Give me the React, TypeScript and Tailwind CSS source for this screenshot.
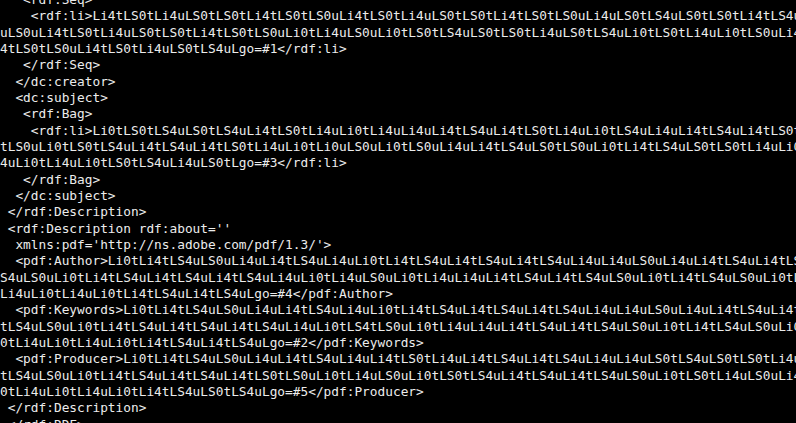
import React from "react";

// terminal dump of an XMP packet, wrapped at the window edge
const lines: string[] = [
  "   <rdf:Seq>",
  "    <rdf:li>Li4tLS0tLi4uLS0tLS0tLi4tLS0tLS0uLi4tLS0tLi4uLS0tLS0tLi4tLS0tLS0uLi4uLS0tLS4uLS0tLS0tLi4tLS4uLS0tLi4u",
  "uLS0uLi4tLS0tLi4uLS0tLS0tLi4tLS0tLS0uLi0tLi4uLS0uLi0tLS0tLS4uLS0tLS0tLi4uLS0tLS4uLi0tLS0tLi4uLi0tLS0uLi4tLS0t",
  "4tLS0tLS0uLi4tLS0tLi4uLS0tLS4uLgo=#1</rdf:li>",
  "   </rdf:Seq>",
  "  </dc:creator>",
  "  <dc:subject>",
  "   <rdf:Bag>",
  "    <rdf:li>Li0tLS0tLS4uLS0tLS4uLi4tLS0tLi4uLi0tLi4uLi4uLi4tLS4uLi4tLS0tLi4uLi0tLS4uLi4uLi4tLS4uLi4tLS0tLi4uLi0t",
  "tLS0uLi0tLS0tLS4uLi4tLS4uLi4tLS0tLi4uLi0tLi0uLS0uLi0tLS0uLi4uLi4tLS4uLS0tLS0uLi0tLi4tLS4uLS0tLS0tLi4uLi0tLS4u",
  "4uLi0tLi4uLi0tLS0tLS4uLi4uLS0tLgo=#3</rdf:li>",
  "   </rdf:Bag>",
  "  </dc:subject>",
  " </rdf:Description>",
  " <rdf:Description rdf:about=''",
  "  xmlns:pdf='http://ns.adobe.com/pdf/1.3/'>",
  "  <pdf:Author>Li0tLi4tLS4uLS0uLi4uLi4tLS4uLi4uLi0tLi4tLS4uLi4tLS4uLi4tLS4uLi4uLi4uLS0uLi4uLi4tLS4uLi4tLS4uLi4u",
  "S4uLS0uLi0tLi4tLS4uLi4tLS4uLi4tLS4uLi4uLi0tLi4uLS0uLi0tLi4uLi4uLi4tLS4uLi4tLS4uLS0uLi0tLi4tLS4uLS0uLi0tLi4u",
  "Li4uLi0tLi4uLi0tLi4tLS4uLi4tLS4uLgo=#4</pdf:Author>",
  "  <pdf:Keywords>Li0tLi4tLS4uLS0uLi4uLi4tLS4uLi4uLi0tLi4tLS4uLi4tLS4uLi4tLS4uLi4uLi4uLS0uLi4uLi4tLS4uLi4tLS4u",
  "tLS4uLS0uLi0tLi4tLS4uLi4tLS4uLi4tLS4uLi4uLi0tLS4tLS0uLi0tLi4uLi4uLi4tLS4uLi4tLS4uLS0uLi0tLi4tLS4uLS0uLi0tLi4u",
  "0tLi4uLi0tLi4uLi0tLi4tLS4uLi4tLS4uLgo=#2</pdf:Keywords>",
  "  <pdf:Producer>Li0tLi4tLS4uLS0uLi4uLi4tLS4uLi4uLi4tLS0tLi4uLi4tLS4uLi4tLS4uLi4uLi4uLS0tLS4uLS0tLS0tLi4uLS0t",
  "tLS4uLS0uLi0tLi4tLS4uLi4tLS4uLi4tLS0tLS0uLi0tLi4uLS0uLi0tLS0tLS4uLi4tLS4uLi4tLS4uLS0uLi0tLS0tLi4uLS0uLi4tLS4u",
  "0tLi4uLi0tLi4uLi0tLi4tLS4uLS0tLS4uLgo=#5</pdf:Producer>",
  " </rdf:Description>",
  " </rdf:RDF>",
];

const App = () => {
  return (
    <div className="w-[796px] h-[423px] overflow-hidden bg-black">
      <div className="mt-[-8px] text-[12.8px] leading-[16.33px] text-[#ececec] font-['DejaVu_Sans_Mono',monospace]">
        {lines.map((line, i) => (
          <div key={i} className="h-[16.33px] whitespace-pre overflow-hidden">
            {line}
          </div>
        ))}
      </div>
    </div>
  );
};

export default App;
